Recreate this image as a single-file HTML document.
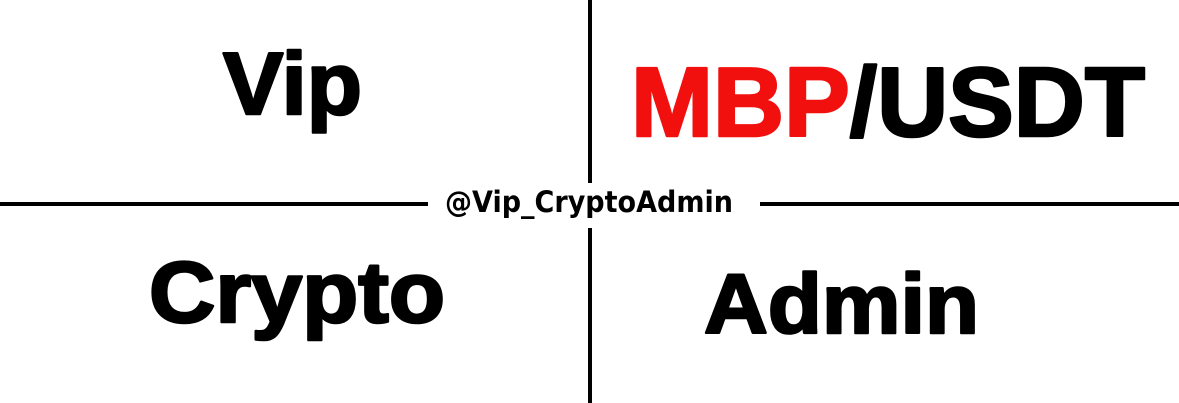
<!DOCTYPE html>
<html><head><meta charset="utf-8"><style>
html,body{margin:0;padding:0;background:#fff;width:1179px;height:403px;overflow:hidden}
</style></head><body>
<svg width="1179" height="403" xmlns="http://www.w3.org/2000/svg">
<rect width="1179" height="403" fill="#fff"/>
<rect x="588" y="0" width="4" height="183" fill="#000"/>
<rect x="588" y="228" width="4" height="175" fill="#000"/>
<rect x="0" y="202" width="428" height="4" fill="#000"/>
<rect x="760" y="202" width="419" height="4" fill="#000"/>
<g font-family="Liberation Sans, Arial, sans-serif" font-weight="bold" stroke-width="2.6" stroke-linejoin="round">
<text x="223" y="114" font-size="88" textLength="139" lengthAdjust="spacingAndGlyphs" fill="#000" stroke="#000">Vip</text>
<text x="631" y="136" font-size="98" textLength="514" lengthAdjust="spacingAndGlyphs" fill="#000" stroke="#000"><tspan fill="#f2100f" stroke="#f2100f">MBP</tspan>/USDT</text>
<text x="149" y="322" font-size="86" textLength="296" lengthAdjust="spacingAndGlyphs" fill="#000" stroke="#000">Crypto</text>
<text x="704" y="333" font-size="84" textLength="275" lengthAdjust="spacingAndGlyphs" fill="#000" stroke="#000">Admin</text>
</g>
<text x="445" y="212" font-family="DejaVu Sans, sans-serif" font-weight="bold" font-size="29" textLength="288" lengthAdjust="spacingAndGlyphs" fill="#000">@Vip_CryptoAdmin</text>
</svg>
</body></html>
